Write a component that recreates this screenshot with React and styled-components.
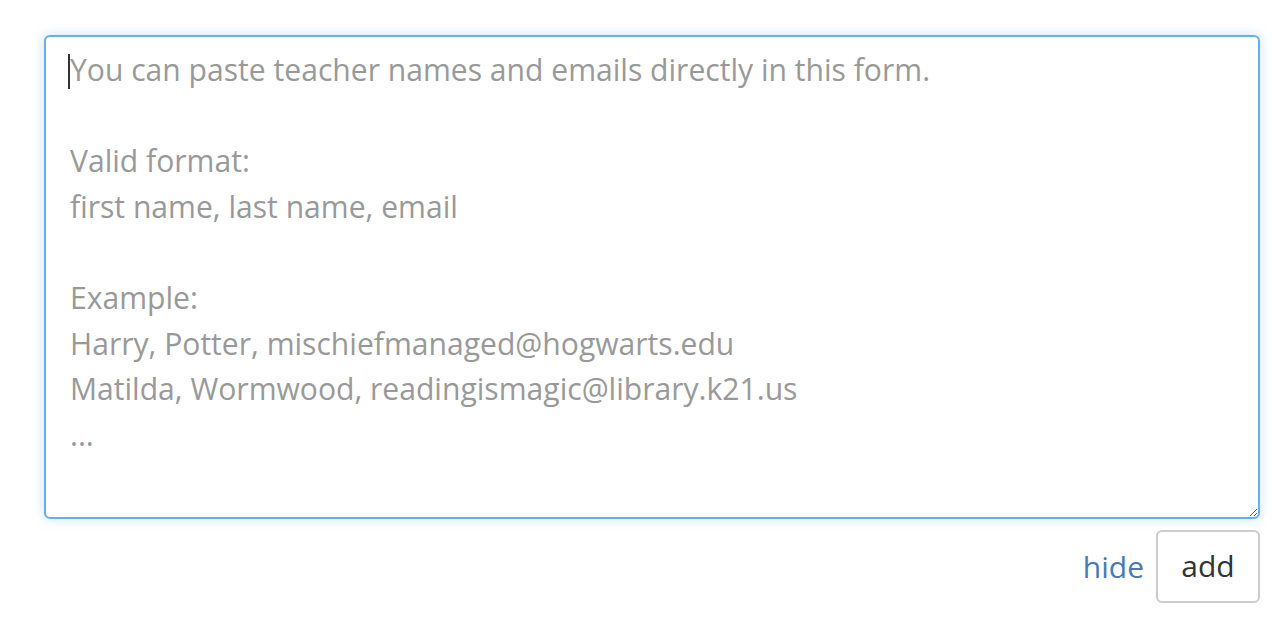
import React from "react";
import styled, { createGlobalStyle } from "styled-components";

const GlobalStyle = createGlobalStyle`
  html, body {
    margin: 0;
    padding: 0;
    background: #fff;
    font-family: "Open Sans", Lato, sans-serif;
  }
`;

const Page = styled.div`
  padding: 35px 16px 0 44px;
  display: flex;
  flex-direction: column;
  gap: 11px;
`;

const Field = styled.div`
  position: relative;
`;

const TextArea = styled.textarea`
  display: block;
  box-sizing: border-box;
  width: 100%;
  height: 484px;
  margin: 0;
  padding: 10px 24px;
  border: 2px solid #66afe9;
  border-radius: 6px;
  box-shadow: 0 0 12px rgba(102, 175, 233, 0.35);
  outline: none;
  font-family: "Open Sans", Lato, sans-serif;
  font-size: 30.1px;
  line-height: 45.6px;
  color: #333;
  resize: vertical;

  &::placeholder {
    color: #999;
    opacity: 1;
  }
`;

const Caret = styled.span`
  position: absolute;
  left: 24px;
  top: 19px;
  width: 2px;
  height: 35px;
  background: #333;
`;

const Actions = styled.div`
  display: flex;
  justify-content: flex-end;
  align-items: center;
  gap: 12px;
`;

const HideLink = styled.a`
  font-size: 30px;
  color: #4a7ab5;
  text-decoration: none;
  cursor: pointer;
`;

const AddButton = styled.button`
  box-sizing: border-box;
  width: 104px;
  height: 73px;
  background: #fff;
  border: 2px solid #ccc;
  border-radius: 6px;
  font-family: "Open Sans", Lato, sans-serif;
  font-size: 30px;
  color: #333;
  padding: 0 0 3px;
`;

const placeholder = `You can paste teacher names and emails directly in this form.

Valid format:
first name, last name, email

Example:
Harry, Potter, mischiefmanaged@hogwarts.edu
Matilda, Wormwood, readingismagic@library.k21.us
...`;

export default function App() {
  return (
    <>
      <GlobalStyle />
      <Page>
        <Field>
          <TextArea placeholder={placeholder} />
          <Caret />
        </Field>
        <Actions>
          <HideLink>hide</HideLink>
          <AddButton type="button">add</AddButton>
        </Actions>
      </Page>
    </>
  );
}
